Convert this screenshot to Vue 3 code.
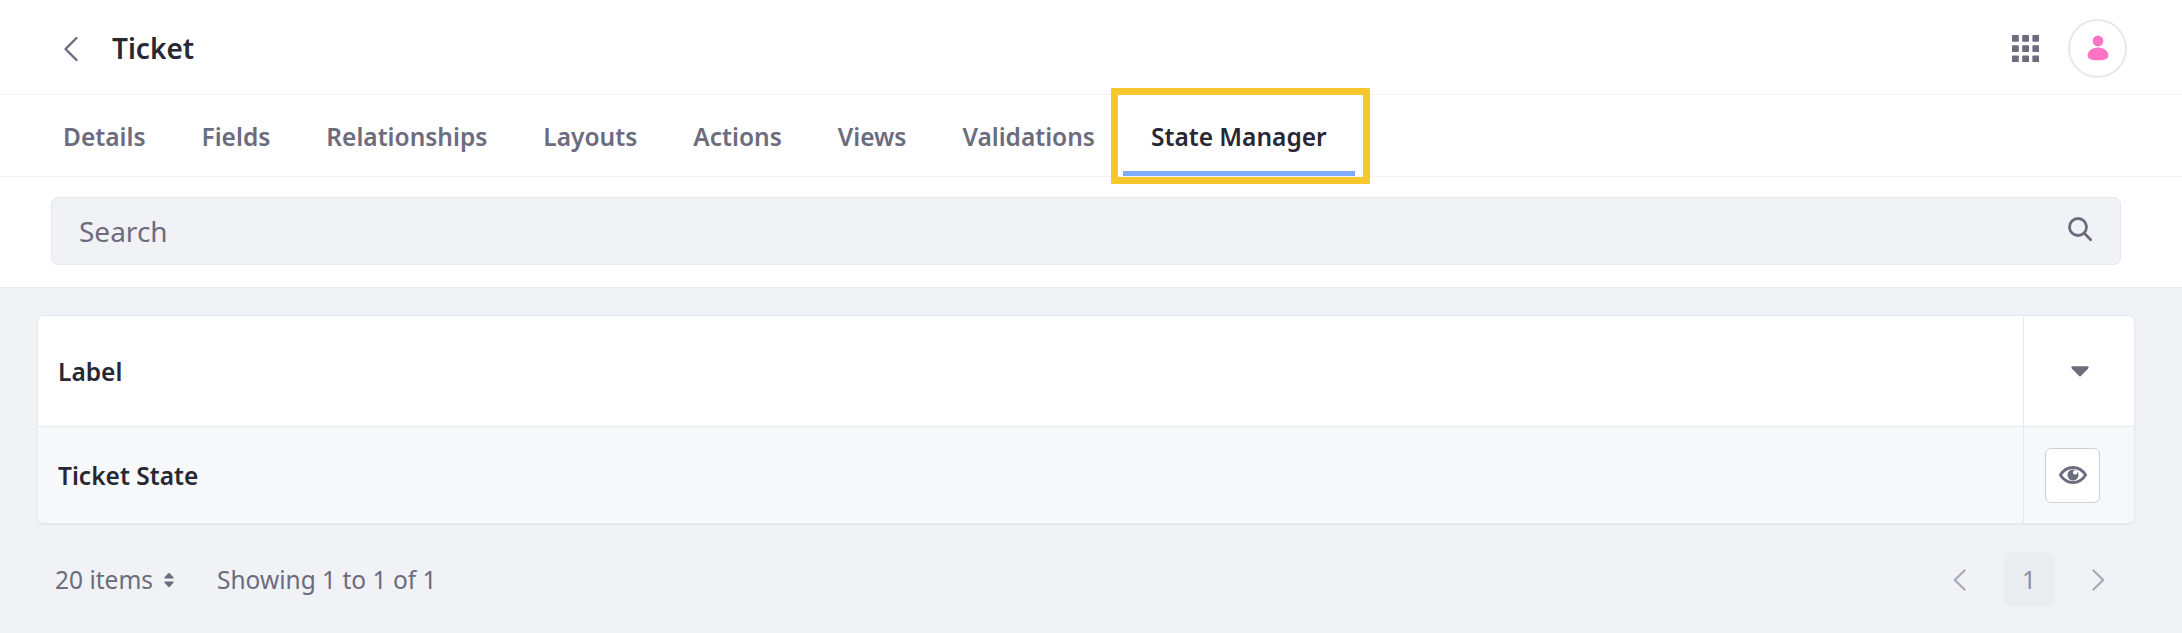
<script setup>
const tabs = ['Details', 'Fields', 'Relationships', 'Layouts', 'Actions', 'Views', 'Validations', 'State Manager']
const activeTab = 'State Manager'
const rows = ['Ticket State']
const dots = [0, 10.2, 20.4]
</script>

<template>
  <div class="page">
    <header class="header">
      <svg class="back" width="16" height="26" viewBox="0 0 16 26"><path d="M13.5 2 L2.5 13 L13.5 24" /></svg>
      <h1>Ticket</h1>
      <svg class="apps" width="27" height="27" viewBox="0 0 27 27">
        <template v-for="y in dots" :key="y">
          <rect v-for="x in dots" :key="x" :x="x" :y="y" width="6.8" height="6.8" rx="0.8" />
        </template>
      </svg>
      <span class="avatar">
        <svg width="22" height="26" viewBox="0 0 22 26">
          <circle cx="11" cy="6" r="5.4" />
          <path d="M11 12.4C17.2 12.4 21.4 16.4 21.4 20.4C21.4 24.2 17 25.3 11 25.3S0.6 24.2 0.6 20.4C0.6 16.4 4.8 12.4 11 12.4Z" />
        </svg>
      </span>
    </header>

    <nav class="tabs">
      <a v-for="tab in tabs" :key="tab" class="tab" :class="{ active: tab === activeTab }">{{ tab }}</a>
    </nav>

    <div class="toolbar">
      <div class="search">
        <span>Search</span>
        <svg width="25" height="25" viewBox="0 0 25 25">
          <circle cx="10" cy="10" r="8.5" />
          <path d="M16.3 16.3 L22.7 22.7" />
        </svg>
      </div>
    </div>

    <main class="content">
      <div class="table">
        <div class="row head">
          <div class="cell">Label</div>
          <div class="cell action">
            <svg class="caret" width="18" height="11" viewBox="0 0 18 11"><path d="M1.5 0.2H16.5Q18.3 0.8 17.2 2.6L10.2 9.8Q9 11 7.8 9.8L0.8 2.6Q-0.3 0.8 1.5 0.2Z" /></svg>
          </div>
        </div>
        <div v-for="row in rows" :key="row" class="row">
          <div class="cell">{{ row }}</div>
          <div class="cell action">
            <span class="view">
              <svg width="28" height="18" viewBox="0 0 28 18">
                <path class="lid" d="M1.4 9C4.5 4 9 1.5 14 1.5S23.5 4 26.6 9C23.5 14 19 16.5 14 16.5S4.5 14 1.4 9Z" />
                <circle cx="14" cy="9" r="5.5" />
                <circle class="glint" cx="16.2" cy="6.4" r="2.2" />
              </svg>
            </span>
          </div>
        </div>
      </div>

      <footer class="footer">
        <span>20 items</span>
        <svg class="sort" width="10" height="14" viewBox="0 0 10 14"><path d="M5 0Q5.6 0 6 .5L9.6 4.4Q9.8 5.4 9 5.5H1Q.2 5.4 .4 4.4L4 .5Q4.4 0 5 0ZM5 14Q5.6 14 6 13.5L9.6 9.6Q9.8 8.6 9 8.5H1Q.2 8.6 .4 9.6L4 13.5Q4.4 14 5 14Z" /></svg>
        <span class="showing">Showing 1 to 1 of 1</span>
        <svg class="prev" width="13" height="22" viewBox="0 0 13 22"><path d="M11.5 1.5 L1.8 11 L11.5 20.5" /></svg>
        <span class="current">1</span>
        <svg class="next" width="13" height="22" viewBox="0 0 13 22"><path d="M1.5 1.5 L11.2 11 L1.5 20.5" /></svg>
      </footer>
    </main>
  </div>
</template>

<style>
body { margin: 0; }
</style>

<style scoped>
.page {
  display: flex;
  flex-direction: column;
  box-sizing: border-box;
  height: 633px;
  background: #fff;
  color: #272833;
  font: 24.5px/37px "Noto Sans", sans-serif;
}
.page * { box-sizing: border-box; }
svg { display: block; flex: none; fill: #6b6c7e; }
.header {
  display: flex;
  align-items: center;
  height: 95px;
  padding: 2px 55px 0 63px;
  border-bottom: 1px solid #f1f2f5;
}
.back { fill: none; stroke: #6b6c7e; stroke-width: 2.4; stroke-linecap: round; stroke-linejoin: round; margin-top: 2px; }
h1 { margin: 0 0 0 33px; font-size: 28px; font-weight: 600; line-height: 42px; }
.apps { margin-left: auto; }
.avatar {
  display: flex;
  align-items: center;
  justify-content: center;
  width: 59px;
  height: 59px;
  margin-left: 29px;
  border: 2px solid #e7e7ed;
  border-radius: 50%;
}
.avatar svg { fill: #ff73c3; }
.tabs {
  display: flex;
  height: 82px;
  padding-left: 35px;
  border-bottom: 1px solid #f1f2f5;
}
.tab { padding: 23px 28px 0; color: #6b6c7e; font-weight: 600; }
.tab.active { position: relative; color: #272833; box-shadow: inset 0 -5px #80acff; }
.tab.active::after {
  content: "";
  position: absolute;
  inset: -7px -15px -8px -12px;
  border: 7px solid #f7c82d;
}
.toolbar { height: 111px; padding: 20px 61px 0 51px; border-bottom: 1px solid #e7e7ed; }
.search {
  display: flex;
  align-items: center;
  justify-content: space-between;
  height: 68px;
  padding: 0 27px;
  border: 1px solid #e7e7ed;
  border-radius: 7px;
  background: #f1f2f5;
  color: #6b6c7e;
  font-size: 28px;
}
.search svg { fill: none; stroke: #6b6c7e; stroke-width: 2.8; stroke-linecap: round; margin-top: -3px; }
.content { flex: 1; padding: 27px 47px 0 37px; background: #f1f2f5; }
.table {
  height: 210px;
  overflow: hidden;
  border: 1px solid #e7e7ed;
  border-bottom-width: 2px;
  border-radius: 7px;
  background: #f7f8f9;
  font-weight: 600;
}
.row { display: grid; grid-template-columns: 1fr 111px; height: 96px; }
.row.head { height: 111px; background: #fff; border-bottom: 1px solid #e7e7ed; }
.cell { display: flex; align-items: center; padding-left: 20px; }
.action { border-left: 1px solid #e7e7ed; padding-left: 21px; }
.caret { margin-left: 26px; }
.view {
  display: flex;
  align-items: center;
  justify-content: center;
  width: 55px;
  height: 55px;
  border: 1px solid #cdced9;
  border-radius: 6px;
  background: #fff;
}
.lid { fill: none; stroke: #6b6c7e; stroke-width: 2.8; stroke-linejoin: round; }
.glint { fill: #fff; }
.footer {
  display: flex;
  align-items: center;
  height: 55px;
  margin-top: 27px;
  padding: 0 30px 0 18px;
  color: #6b6c7e;
}
.sort { margin-left: 11px; }
.showing { margin-left: 43px; }
.prev, .next { fill: none; stroke: #a7a9bc; stroke-width: 2.2; stroke-linecap: round; stroke-linejoin: round; }
.prev { margin-left: auto; }
.current {
  width: 50px;
  height: 55px;
  margin: 0 38px;
  border-radius: 7px;
  background: #ebecf0;
  color: #8b8c99;
  line-height: 55px;
  text-align: center;
}
</style>
